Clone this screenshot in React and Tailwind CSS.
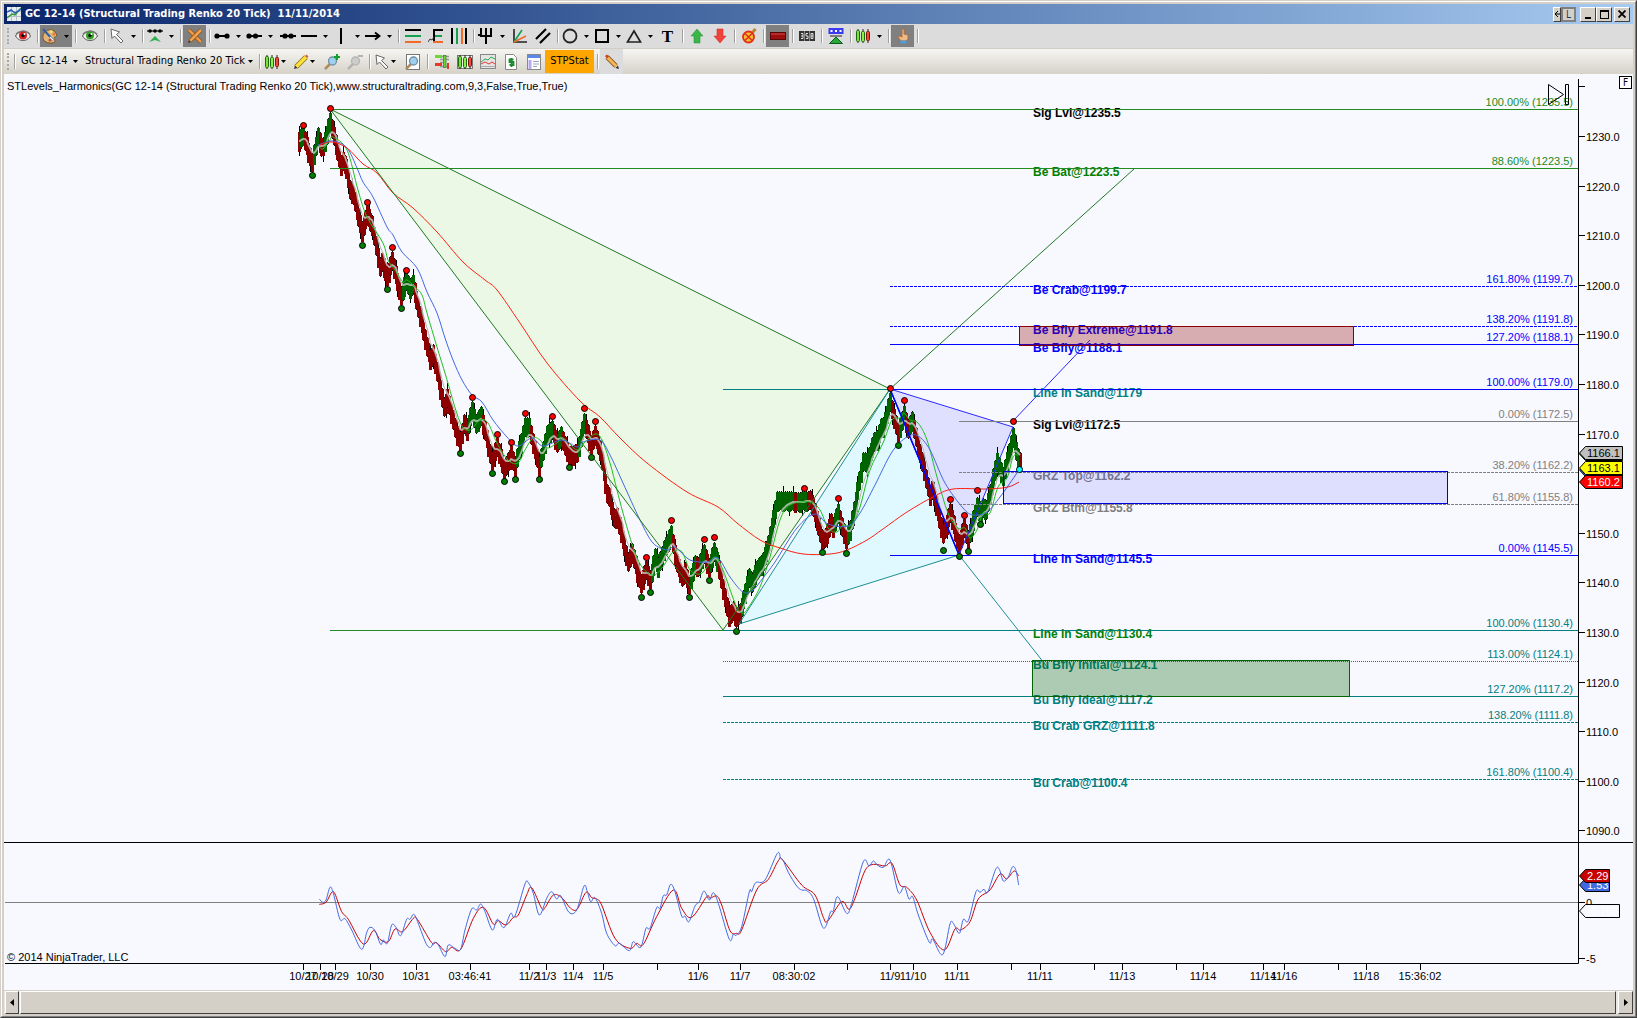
import { Fragment } from "react";

/* ---------- toolbar icons ---------- */

const CANDLES = (
  <g strokeWidth="1">
    <path d="M3 1v14M8 1v14M13 1v14" stroke="#222" />
    <rect x="1.5" y="2.5" width="3" height="11" rx="1" fill="#7be03a" stroke="#1c6b10" />
    <rect x="6.5" y="3.5" width="3" height="10" rx="1" fill="#8df04a" stroke="#1c6b10" />
    <rect x="11.5" y="3.5" width="3" height="9" rx="1" fill="#f04a3a" stroke="#7d1510" />
  </g>
);

const EYE = (color) => (
  <g>
    <path d="M0.5 8C3 4 6 3 8.500 3S13 4 15.500 8C13 12 10 12.500 8 12.500S3 12 0.500 8z" fill="#f4f0ec" stroke="#4b4b4b" />
    <path d="M1 6.500C4 2.500 12 2.500 15 6.500" fill="none" stroke="#777" strokeWidth="1.500" />
    <circle cx="8" cy="7.500" r="4" fill={color} />
    <circle cx="8" cy="7.500" r="1.700" fill="#111" />
    <circle cx="9.500" cy="6" r="1" fill="#fff" />
  </g>
);

const POINTER = <path d="M2 1l1 9.500 2.500-2.500 6.500 7 2-2-6.500-6.500 3-2.500z" fill="#fff" stroke="#666" />;

const LENS = (
  <g>
    <path d="M6 10l-5 5" stroke="#b08a5a" strokeWidth="2.500" />
    <circle cx="8.500" cy="7" r="4" fill="#9fd0ee" stroke="#6f8ea6" strokeWidth="1.300" />
  </g>
);

const ICONS = {
  eyeRed: EYE("#d31f1f"),
  eyeGreen: EYE("#35a327"),
  palette: (
    <g>
      <path d="M3 4c3-3 8-3 10 0 3 3 1 5 0 5-2 1 0 2 0 4s-5 3-9 1-4-7-1-10z" fill="#e0b47a" stroke="#7c5223" />
      <circle cx="9" cy="3.500" r="1.500" fill="#ede36a" />
      <circle cx="12" cy="6" r="1.500" fill="#e07b3a" />
      <circle cx="8" cy="12" r="1.500" fill="#c8432f" />
      <path d="M1 1l10 11" stroke="#2c5fa8" strokeWidth="2" />
      <path d="M8 9l3 3" stroke="#e8eef5" strokeWidth="1.500" />
    </g>
  ),
  pointer: POINTER,
  swing: (
    <g>
      <path d="M0 3h16" stroke="#111" strokeWidth="1.200" />
      <circle cx="3" cy="3" r="1.800" />
      <circle cx="8" cy="3" r="1.800" />
      <circle cx="13" cy="3" r="1.800" />
      <path d="M2 14l6-6 6 6-6-2z" fill="#2fae4d" />
    </g>
  ),
  tools: (
    <g>
      <path d="M2 2l12 12" stroke="#8a4b12" strokeWidth="4" />
      <path d="M2 2l12 12" stroke="#e79a4b" strokeWidth="2.600" />
      <path d="M14 2L3 13" stroke="#8a4b12" strokeWidth="4" />
      <path d="M14 2L3 13" stroke="#f2a24c" strokeWidth="2.600" />
      <path d="M1 15l1-3 2 2z" fill="#333" />
    </g>
  ),
  segment: (
    <g>
      <path d="M2 8h12" stroke="#000" strokeWidth="2" />
      <circle cx="3" cy="8" r="2.600" />
      <circle cx="13" cy="8" r="2.600" />
    </g>
  ),
  ray: (
    <g>
      <path d="M2 8h14" stroke="#000" strokeWidth="2" />
      <circle cx="3" cy="8" r="2.600" />
      <circle cx="9.500" cy="8" r="2.600" />
    </g>
  ),
  extended: (
    <g>
      <path d="M0 8h16" stroke="#000" strokeWidth="2" />
      <circle cx="5" cy="8" r="2.600" />
      <circle cx="11" cy="8" r="2.600" />
    </g>
  ),
  hline: <path d="M0 8h16" stroke="#000" strokeWidth="2" />,
  vline: <path d="M8 0v16" stroke="#000" strokeWidth="2" />,
  arrow: <path d="M0 8h14M10 4.500L14.500 8 10 11.500" fill="none" stroke="#000" strokeWidth="2" />,
  fib: (
    <g strokeWidth="2">
      <path d="M0 2h16" stroke="#000" />
      <path d="M0 8h16" stroke="#12a150" />
      <path d="M0 14h16" stroke="#f26a2a" />
    </g>
  ),
  fibExt: (
    <g fill="none" strokeWidth="2">
      <path d="M6 1v13M6 2h9" stroke="#000" />
      <path d="M7 8h7" stroke="#12a150" />
      <path d="M5 14h10" stroke="#f26a2a" />
      <path d="M0 14l2-3 2 1 2-3" stroke="#333" strokeWidth="1" />
    </g>
  ),
  fibTime: (
    <g strokeWidth="2">
      <path d="M1 0v16M15 0v16" stroke="#000" />
      <path d="M6 0v16" stroke="#12a150" />
      <path d="M11 0v16" stroke="#f26a2a" />
    </g>
  ),
  pitchfork: <path d="M3 0v8h10V0M8 0v16M3 7h-3" fill="none" stroke="#000" strokeWidth="2" />,
  fan: (
    <g strokeWidth="1.600" fill="none">
      <path d="M2 1v13h13" stroke="#222" />
      <path d="M2 14L10 2" stroke="#12a150" />
      <path d="M2 14l12-6" stroke="#f26a2a" />
    </g>
  ),
  parallel: <path d="M1 11L11 1M5 15L15 5" stroke="#000" strokeWidth="2.200" />,
  ellipse: <circle cx="8" cy="8" r="6.500" fill="none" stroke="#222" strokeWidth="1.800" />,
  square: <rect x="2" y="2" width="12" height="12" fill="none" stroke="#000" strokeWidth="2" />,
  triangle: <path d="M8 3L14.500 14h-13z" fill="none" stroke="#222" strokeWidth="1.700" />,
  up: <path d="M8 1l6 7h-3v7H5V8H2z" fill="#39b54a" stroke="#2a9a3b" strokeWidth=".6" />,
  down: <path d="M8 15L2 8h3V1h6v7h3z" fill="#ef4238" stroke="#d5342c" strokeWidth=".6" />,
  noDraw: (
    <g>
      <path d="M14.500 1L4 13" stroke="#c08030" strokeWidth="3" />
      <circle cx="7.500" cy="9" r="5.500" fill="#f5c02c" stroke="#e0301e" strokeWidth="1.800" />
      <path d="M4 5.500l7 7M11 5.500l-7 7" stroke="#e0301e" strokeWidth="1.500" />
    </g>
  ),
  bar: (
    <g>
      <rect x="0.500" y="4.500" width="15" height="7" fill="#9c0d0d" stroke="#5a0505" />
      <path d="M1 6h14" stroke="#d24a4a" />
    </g>
  ),
  counter: (
    <g>
      <rect x="0" y="3" width="16" height="10" fill="#333" />
      <path d="M5.500 3v10M10.500 3v10" stroke="#888" />
      <path d="M2 5.500h2v5H2M2 8h2M9 5.500H7V8h2v2.500H7M12 5.500h2v5h-2zM12 8h2" fill="none" stroke="#eee" strokeWidth=".9" />
    </g>
  ),
  zone: (
    <g>
      <rect x="0.500" y="0" width="15" height="6" fill="#3a3af0" />
      <path d="M2.500 3h2M7 3h2M11.500 3h2" stroke="#fff" strokeWidth="2" />
      <path d="M8 9l6.500 6.500h-13z" fill="#28a838" stroke="#0c5a18" />
      <path d="M2 8h12" stroke="#222" />
    </g>
  ),
  candles: CANDLES,
  hand: (
    <g>
      <path d="M7 1h2v5l4 1v4l-2 2H6L3 9l1-1 3 1z" fill="#f0b984" stroke="#a8683a" strokeWidth=".8" />
      <rect x="5.500" y="12.500" width="6" height="3" fill="#4aa0dc" />
    </g>
  ),
  pencilYellow: (
    <g>
      <path d="M3 13L13 3" stroke="#8a7410" strokeWidth="5" />
      <path d="M3 13L13 3" stroke="#ffe13a" strokeWidth="3.400" />
      <path d="M12 2l2 2 1.500-1.500-2-2z" fill="#d8604a" />
      <path d="M1 15l1-3.500L4.500 14z" fill="#333" />
    </g>
  ),
  pencilOrange: (
    <g>
      <path d="M3 3l9 9" stroke="#8a5a20" strokeWidth="4.600" />
      <path d="M3 3l9 9" stroke="#f7b556" strokeWidth="3" />
      <path d="M1 2l2-1.500 2 2L3 4.500z" fill="#c8412c" />
      <path d="M15 15l-3.500-1L14 11.500z" fill="#333" />
    </g>
  ),
  zoomIn: (
    <g>
      {LENS}
      <path d="M13 0v6M10 3h6" stroke="#12a12a" strokeWidth="2" />
    </g>
  ),
  zoomOut: (
    <g fill="#ccc" stroke="#b4b4b4">
      <path d="M6 10l-5 5" strokeWidth="2.500" />
      <circle cx="8.500" cy="7" r="4" strokeWidth="1.300" />
      <path d="M11 2h5" strokeWidth="2" />
    </g>
  ),
  zoomBox: (
    <g>
      <rect x="1.500" y=".5" width="13" height="15" fill="#fff" stroke="#777" />
      {LENS}
    </g>
  ),
  chartTrader: (
    <g>
      <path d="M6 2.500h9M6 5.500h9M6 8.500h6M6 12.500h9" stroke="#999" strokeWidth="1.500" />
      <path d="M1 1h7v3H1z" fill="#6fd63a" />
      <path d="M1 9h7v3H1z" fill="#e2382e" />
      <rect x="9.500" y="1.500" width="2.500" height="12" fill="#6fd63a" stroke="#2f7d1c" strokeWidth=".7" />
      <rect x="13" y="9" width="2" height="6" fill="#e2382e" />
    </g>
  ),
  dataSeries: (
    <g>
      <rect x=".5" y="1.500" width="15" height="13" fill="#f2f2f2" stroke="#777" />
      {CANDLES}
    </g>
  ),
  indicators: (
    <g>
      <rect x=".5" y=".5" width="15" height="14" fill="#e4e4e4" stroke="#888" />
      <path d="M1 8l4-3 3 1 3-3 4 2" fill="none" stroke="#2fae4d" />
      <path d="M1 10l4-2 4 2 3-2 3 2" fill="none" stroke="#e2382e" />
      <path d="M1 12.500h14" stroke="#aaa" />
    </g>
  ),
  strategy: (
    <g>
      <path d="M2.500.5h8l3 3v12h-11z" fill="#fff" stroke="#888" />
      <path d="M10.500 5.500H6.500V8h4v3h-4M8.500 4v9" fill="none" stroke="#1c8a2a" strokeWidth="1.800" />
    </g>
  ),
  properties: (
    <g>
      <rect x="1.500" y=".5" width="13" height="15" fill="#fff" stroke="#888" />
      <path d="M2 2.500h12" stroke="#5a8be8" strokeWidth="3" />
      <path d="M4 6v9" stroke="#b4a8f0" strokeWidth="3" />
      <path d="M7 7.500h6M7 10h6M7 12.500h4" stroke="#9aa6b8" />
    </g>
  ),
};

const Icon = ({ name }) => (
  <svg viewBox="0 0 16 16" className="size-4 shrink-0" aria-hidden="true">
    {ICONS[name]}
  </svg>
);

const Caret = () => (
  <svg viewBox="0 0 5 3" className="h-[3px] w-[5px] shrink-0" aria-hidden="true">
    <path d="M0 0h5L2.500 3z" />
  </svg>
);

const Grip = () => (
  <span className="flex w-[7px] shrink-0 justify-center">
    <span className="my-1 border-l-2 border-dotted border-[#a8a8a8]" />
  </span>
);

const Sep = () => (
  <span className="flex w-[6px] shrink-0 justify-end py-[5px] pr-px">
    <span className="w-[2px] border-l border-[#a0a0a0] bg-white" />
  </span>
);

// "|" is a divider, a trailing "v" adds a menu arrow, a leading "*" is pressed
const DRAWING_TOOLS = [
  "eyeRed", "|", "*palette v", "|", "eyeGreen", "|", "pointer v", "|", "swing v", "|", "*tools", "|",
  "segment v", "ray v", "extended", "hline v", "vline v", "arrow v", "|", "fib", "fibExt", "fibTime", "|",
  "pitchfork v", "fan", "parallel", "|", "ellipse v", "square v", "triangle v", "text", "|", "up", "down", "|",
  "noDraw", "|", "*bar", "|", "counter", "|", "zone", "|", "candles v", "|", "*hand", "|",
];

function ToolButton({ spec, compact }) {
  const pressed = spec.startsWith("*");
  const menu = spec.endsWith(" v");
  const name = spec.replace("*", "").replace(" v", "");
  return (
    <button
      aria-label={name}
      className={[
        "my-px flex shrink-0 items-center",
        menu ? (compact ? "w-[29px] gap-px pl-[2px]" : "w-8 gap-[6px] pl-[2px]") : "w-[23px] justify-center",
        pressed ? "bg-[#808080]" : "",
      ].join(" ")}
    >
      {name === "text" ? (
        <span className="w-full text-center font-['Liberation_Serif',serif] text-[17px] leading-none font-bold">T</span>
      ) : (
        <Icon name={name} />
      )}
      {menu && <Caret />}
    </button>
  );
}

function Tools({ items, compact }) {
  return items.map((spec, i) => (spec === "|" ? <Sep key={i} /> : <ToolButton key={i} spec={spec} compact={compact} />));
}

function Picker({ label, value, width }) {
  return (
    <label className={`relative flex shrink-0 items-center ${width}`}>
      <select aria-label={label} className="w-full appearance-none bg-transparent pl-1 outline-none">
        <option>{value}</option>
      </select>
      <span className="pointer-events-none absolute right-[3px] flex">
        <Caret />
      </span>
    </label>
  );
}

const RAISED = "border border-t-white border-l-white border-r-[#404040] border-b-[#404040] bg-[#d4d0c8]";

function TitleBar() {
  return (
    <header className="flex h-5 items-center bg-linear-to-r from-[#0a246a] to-[#a6caf0] px-[3px] text-white">
      <svg viewBox="0 0 14 14" className="size-[14px]" aria-hidden="true">
        <rect width="14" height="14" fill="#e8edf2" />
        <path d="M0 4.500h14M0 9.500h14M4.500 0v14M9.500 0v14" stroke="#b4bcc8" />
        <path d="M0 11l5-4 3 1 6-7" fill="none" stroke="#2f9a2f" strokeWidth="1.500" />
        <path d="M0 5l4-2 4 3 6-4" fill="none" stroke="#2c5fb8" strokeWidth="1.500" />
      </svg>
      <h1 className="ml-1 whitespace-pre text-[11px] leading-5 font-bold">
        {"GC 12-14 (Structural Trading Renko 20 Tick)  11/11/2014"}
      </h1>
      <div className="ml-auto flex text-black">
        <button className={`flex h-[15px] w-2 items-center ${RAISED}`} aria-label="Link">
          <svg viewBox="0 0 6 8" className="h-2 w-[6px]"><path d="M6 4H1M4 1L1 4l3 3" fill="none" stroke="#000" /></svg>
        </button>
        <button className="mr-1 h-[15px] w-[15px] border-2 border-[#808080] bg-[#d4d0c8] text-[10px] leading-[11px] text-[#1c3a6a]">L</button>
        <button className={`flex h-[15px] w-4 items-end justify-center pb-[2px] ${RAISED}`} aria-label="Minimize">
          <span className="h-[2px] w-[6px] bg-black" />
        </button>
        <button className={`mr-[2px] flex h-[15px] w-4 items-center justify-center ${RAISED}`} aria-label="Maximize">
          <span className="h-[9px] w-[9px] border border-t-2 border-black" />
        </button>
        <button className={`flex h-[15px] w-4 items-center justify-center ${RAISED}`} aria-label="Close">
          <svg viewBox="0 0 8 8" className="size-2"><path d="M.5.5l7 7M7.500.5l-7 7" stroke="#000" strokeWidth="1.800" /></svg>
        </button>
      </div>
    </header>
  );
}

/* ---------- chart data ---------- */

const AXIS_X = 1578;
const priceY = (p) => 136 + (1230 - p) * 4.96;

const GREEN = "#228b22";
const TEAL = "#008080";
const BLUE = "#0000ff";
const GRAY = "#808080";

// y, start x, stroke, dash, right hand label, bold caption, caption colour
const LEVELS = [
  [109, 330, GREEN, null, "100.00% (1235.5)", "Sig Lvl@1235.5", "#000"],
  [168, 330, GREEN, null, "88.60% (1223.5)", "Be Bat@1223.5", "#008000"],
  [286, 890, BLUE, "3 1", "161.80% (1199.7)", "Be Crab@1199.7", BLUE],
  [326, 890, BLUE, "3 1", "138.20% (1191.8)", "Be Bfly Extreme@1191.8", BLUE],
  [344, 890, BLUE, null, "127.20% (1188.1)", "Be Bfly@1188.1", BLUE],
  [389, 890, BLUE, null, "100.00% (1179.0)", "Line in Sand@1179", TEAL],
  [421, 959, GRAY, null, "0.00% (1172.5)", "Sig Lvl@1172.5", "#000"],
  [472, 959, GRAY, "3 1", "38.20% (1162.2)", "GRZ Top@1162.2", GRAY],
  [504, 959, GRAY, "3 1", "61.80% (1155.8)", "GRZ Btm@1155.8", GRAY],
  [555, 890, BLUE, null, "0.00% (1145.5)", "Line in Sand@1145.5", BLUE],
  [630, 723, TEAL, null, "100.00% (1130.4)", "Line in Sand@1130.4", "#008000"],
  [661, 723, TEAL, "1 1", "113.00% (1124.1)", "Bu Bfly Initial@1124.1", TEAL],
  [696, 723, TEAL, null, "127.20% (1117.2)", "Bu Bfly Ideal@1117.2", TEAL],
  [722, 723, TEAL, "3 1", "138.20% (1111.8)", "Bu Crab GRZ@1111.8", TEAL],
  [779, 723, TEAL, "3 1", "161.80% (1100.4)", "Bu Crab@1100.4", TEAL],
];

// brick path: x, y, direction colour of the leg that ends there
const BRICKS = `297,141,r 300,140,r 301,138,g 303,135,g 312,163,r 318,137,g 321,147,r 323,147,r 330,122,g 341,165,r 343,161,r 346,168,r
350,190,r 353,195,r 362,231,r 367,215,r 372,225,r 380,267,r 382,262,r 387,277,r 392,261,r 401,296,r 406,281,g 410,288,g 413,284,g
416,300,r 427,347,r 430,359,r 433,354,r 444,407,r 447,398,r 457,435,r 460,441,r 464,424,r 467,430,r 472,411,g 476,424,g 481,416,g
492,461,r 497,447,r 504,469,r 508,462,r 511,455,r 515,466,r 525,427,g 529,427,g 539,466,r 547,435,g 552,430,g 557,443,r 561,436,g
569,456,r 577,453,r 584,423,g 591,445,r 595,435,r 600,450,r 607,494,r 609,497,r 614,518,r 617,517,r 628,562,r 632,553,r 641,584,r
646,570,r 650,580,r 655,558,g 658,567,g 664,550,g 671,535,g 677,563,r 682,577,r 685,572,r 689,585,r 695,565,g 698,567,r 704,554,g
709,568,r 714,552,g 717,561,g 729,616,r 733,611,r 736,618,r 740,613,r 743,600,g 749,578,g 752,583,g 757,570,g 763,562,g 768,545,g
777,501,g 793,501,g 796,502,r 806,501,g 810,500,r 813,507,r 822,539,r 825,538,r 831,523,r 833,527,r 838,513,g 846,540,r 850,530,g
863,462,g 867,462,g 874,442,g 877,440,g 881,428,g 883,427,g 890,402,g 898,433,r 904,415,g 908,429,r 912,421,g 930,495,r 932,490,r
943,534,r 950,513,r 959,544,r 964,528,r 968,540,r 977,507,g 981,513,g 983,508,g 986,510,g 997,462,g 1003,477,g 1013,437,g
1018,458,g 1020,462,r`
  .split(/\s+/)
  .map((s) => s.split(","))
  .map(([x, y, c]) => [Number(x), Number(y), c]);

const HIGHS = [
  [303, 125], [330, 108], [367, 202], [392, 247], [406, 270], [472, 397], [497, 434], [511, 442], [525, 413], [552, 416],
  [584, 408], [595, 421], [646, 557], [671, 520], [704, 539], [714, 537], [804, 488], [838, 498], [890, 388], [904, 400],
  [950, 499], [964, 515], [977, 490], [1013, 421],
];
const LOWS = [
  [312, 175], [362, 245], [387, 289], [401, 308], [460, 453], [492, 473], [504, 481], [515, 479], [539, 479], [569, 467],
  [591, 457], [641, 597], [650, 592], [689, 597], [709, 580], [736, 631], [822, 552], [846, 553], [898, 445], [943, 550],
  [959, 556], [968, 551], [980, 524],
];

// Catmull-Rom through the samples, written as cubic segments
function smooth(points) {
  const p = points.split(" ").map((s) => s.split(",").map(Number));
  let d = `M${p[0]}`;
  for (let i = 0; i < p.length - 1; i++) {
    const a = p[i - 1] ?? p[i];
    const b = p[i];
    const c = p[i + 1];
    const e = p[i + 2] ?? c;
    d += `C${b[0] + (c[0] - a[0]) / 6} ${b[1] + (c[1] - a[1]) / 6} ${c[0] - (e[0] - b[0]) / 6} ${c[1] - (e[1] - b[1]) / 6} ${c[0]} ${c[1]}`;
  }
  return d;
}

const FAST_MA = smooth(
  "320,147 323,149 330,140 333,137 347,150 358,190 367,217 383,243 388,260 395,270 403,282 407,280 415,287 422,295 427,313 437,347 445,373 460,422 470,430 480,420 488,423 497,443 508,460 518,463 525,450 533,438 540,440 547,448 557,443 563,438 577,450 584,443 595,434 602,440 610,463 617,490 623,513 633,547 642,567 653,575 662,568 673,552 682,552 690,570 700,574 707,567 715,557 723,570 735,603 742,613 748,608 760,587 770,557 780,520 790,505 810,502 820,510 828,528 837,532 843,525 852,525 860,507 870,470 883,443 892,420 900,418 904,413 910,420 918,423 927,440 937,477 948,513 958,528 965,528 970,538 977,530 983,513 990,513 998,487 1007,478 1013,457 1018,455"
);
const MID_MA = smooth(
  "318,145 333,141 347,148 357,168 363,182 373,197 387,227 393,235 402,252 417,268 427,292 437,313 445,338 453,360 462,380 472,395 482,402 493,420 507,437 518,446 532,438 543,446 562,440 577,447 583,442 600,440 610,455 623,483 640,520 653,543 667,550 675,547 690,560 707,562 718,558 730,577 743,592 753,590 763,578 775,562 797,528 815,514 828,524 848,526 860,513 875,485 892,452 907,437 918,436 930,450 945,483 963,508 973,515 987,512 1000,497 1017,473"
);
const SLOW_MA = smooth(
  "320,145 332,142 347,148 363,164 377,173 393,193 413,208 437,232 463,262 485,280 497,290 520,323 547,363 580,401 600,417 620,438 647,463 687,492 718,507 737,523 760,540 780,548 803,554 830,554 847,550 867,540 883,529 907,512 933,497 953,489 987,489 1008,487 1019,482"
);

// oscillator samples, three units to a pixel, origin at 280,830
const OSC = smooth(
  "118,207 128,217 138,210 150,172 160,190 180,268 195,266 215,300 245,358 260,308 270,292 285,302 302,343 310,330 322,340 335,285 348,292 362,317 380,268 390,268 400,253 410,268 438,340 452,352 462,337 475,345 495,380 505,345 525,355 542,358 555,300 575,237 590,240 602,222 615,245 637,300 652,268 672,293 692,250 705,258 735,162 745,158 760,190 778,255 800,205 815,185 830,207 842,197 867,247 890,240 912,168 922,185 932,215 945,203 965,250 980,310 1005,347 1018,340 1048,362 1060,335 1082,352 1098,295 1110,295 1130,233 1140,235 1150,197 1160,195 1172,163 1185,185 1205,258 1215,258 1227,275 1245,228 1258,215 1272,183 1288,210 1300,188 1315,220 1348,328 1360,312 1368,316 1385,290 1408,185 1415,185 1427,158 1455,150 1492,70 1502,85 1510,92 1525,127 1550,168 1565,180 1580,182 1600,205 1625,285 1637,290 1652,245 1660,243 1673,200 1700,250 1715,220 1750,95 1767,108 1780,93 1792,105 1810,112 1830,90 1855,187 1873,170 1887,207 1898,200 1915,255 1948,337 1958,327 1988,374 2010,282 2020,280 2038,310 2050,268 2065,272 2088,185 2100,187 2112,178 2123,187 2147,118 2158,118 2170,153 2185,140 2198,110 2208,122 2216,165"
);
const OSC_SIGNAL = smooth(
  "118,223 138,217 155,187 165,192 185,245 205,268 250,342 280,302 300,328 325,335 345,297 368,305 400,265 412,268 455,338 470,338 497,365 515,352 542,358 580,265 610,232 640,282 655,272 678,285 700,262 715,255 740,195 755,173 785,235 795,233 820,195 845,203 872,235 892,237 918,187 935,203 950,207 965,225 1005,325 1050,355 1070,340 1090,343 1130,260 1180,180 1205,235 1235,262 1280,200 1290,205 1310,198 1325,225 1350,302 1370,310 1385,300 1430,180 1465,148 1495,92 1508,90 1565,165 1605,195 1630,262 1643,273 1685,215 1707,238 1725,205 1755,122 1780,103 1815,108 1830,98 1840,108 1860,165 1880,172 1910,210 1950,307 1993,360 2025,297 2042,300 2070,275 2095,207 2130,180 2160,132 2180,147 2202,123 2216,138"
);

const TIMES = [
  [303, "10/27"], [320, "10/28"], [335, "10/29"], [370, "10/30"], [416, "10/31"], [470, "03:46:41"], [529, "11/2"],
  [546, "11/3"], [573, "11/4"], [603, "11/5"], [657], [698, "11/6"], [740, "11/7"], [794, "08:30:02"], [847],
  [890, "11/9"], [913, "11/10"], [957, "11/11"], [1011], [1040, "11/11"], [1094], [1122, "11/13"], [1176],
  [1203, "11/14"], [1263, "11/14"], [1284, "11/16"], [1338], [1366, "11/18"], [1420, "15:36:02"],
];

const PRICES = [1230, 1220, 1210, 1200, 1190, 1180, 1170, 1150, 1140, 1130, 1120, 1110, 1100, 1090];

// one bar every two pixels along the brick path
const BARS = BRICKS.slice(1).flatMap(([x, y, c], i) => {
  const [px, py] = BRICKS[i];
  const steps = Math.max(1, Math.round((x - px) / 2));
  return Array.from({ length: steps }, (_, k) => {
    const t = (k + 1) / steps;
    return { x: Math.round(px + (x - px) * t), y: Math.round(py + (y - py) * t), c };
  });
});

let ema = BARS[0].y;
const TRAIL = BARS.map((b) => {
  ema += (b.y - ema) * 0.28;
  return `${b.x},${Math.round(ema)}`;
}).join(" ");

function Bars() {
  return BARS.map(({ x, y, c }, i) => {
    const up = (i * 7) % 5 === 0 ? 15 : 10;
    const down = (i * 5) % 7 === 0 ? 15 : 10;
    return (
      <Fragment key={i}>
        <path d={`M${x + 0.5} ${y - up}V${y + down}`} stroke="#000" />
        <rect x={x - 1} y={y - 9} width="3" height={i % 3 ? 18 : 20} fill={c === "g" ? "#006400" : "#8b0000"} />
      </Fragment>
    );
  });
}

function Tag({ y, right, fill, color, children }) {
  return (
    <g>
      <path d={`M${AXIS_X + 1.5} ${y + 7}l6-6.500H${right + 0.5}v13H${AXIS_X + 7.5}z`} fill={fill} stroke="#000" />
      <text x={AXIS_X + 9} y={y + 11} fill={color}>{children}</text>
    </g>
  );
}

function Chart() {
  return (
    <svg viewBox="4 74 1629 916" className="block h-auto w-full bg-[#f8f8ff] font-['Liberation_Sans',Arial,sans-serif] text-[11px]">
      {/* pattern fills */}
      <path d="M330 109L890 389L723 630z" fill="#ebf8e5" />
      <path d="M890 389L959 555L739 624z" fill="#e0f8ff" />
      <path d="M890 389L1013 427L959 555z" fill="#dfdfff" />

      {/* price */}
      <Bars />
      <g fill="none">
        <polyline points={TRAIL} stroke="#fff" strokeWidth="2" opacity=".5" />
        <polyline points={TRAIL} stroke="#b4b4b4" />
        <path d={FAST_MA} stroke="#1fbf1f" />
        <path d={MID_MA} stroke="#4169e1" />
        <path d={SLOW_MA} stroke="#ff2010" />
      </g>

      {/* pattern legs */}
      <g fill="none">
        <path d="M330 109L890 389L723 630zM890 389L1134 169" stroke="#1f7a1f" />
        <path d="M890 389L959 555L739 624zM959 555L1048 668" stroke="#1a9090" />
        <path d="M890 389L1013 427L959 555zM1013 421L1090 340" stroke="#2a2aff" />
        <path d="M890 389L959 555" stroke={BLUE} strokeWidth="1.500" />
      </g>

      {/* levels */}
      {LEVELS.map(([y, x, stroke, dash, label, caption, color]) => (
        <g key={label}>
          <text x="1033" y={y + 8} fill={color} className="text-[12px] font-bold">{caption}</text>
          <text x="1573" y={y - 3} textAnchor="end" fill={stroke}>{label}</text>
          <path d={`M${x} ${y + 0.5}H${AXIS_X}`} stroke={stroke} strokeDasharray={dash ?? undefined} />
        </g>
      ))}
      <path d="M723 389.500H890" stroke={TEAL} />
      <path d="M330 630.500H723" stroke={GREEN} />

      {/* zones */}
      <rect x="1019.500" y="326.500" width="334" height="19" fill="#8b0000" fillOpacity=".3" stroke="#8b0000" />
      <rect x="1003.500" y="471.500" width="444" height="32" fill="#0000ff" fillOpacity=".1" stroke="#0000dd" />
      <rect x="1032.500" y="660.500" width="317" height="36" fill="#006400" fillOpacity=".3" stroke="#006400" />

      {/* swing points */}
      <g stroke="#000">
        {LOWS.map(([x, y]) => <circle key={x} cx={x + 0.5} cy={y + 0.5} r="3" fill="#008000" />)}
        {HIGHS.map(([x, y]) => <circle key={x} cx={x + 0.5} cy={y + 0.5} r="3" fill="#ff0000" />)}
        <circle cx="1019.500" cy="469.500" r="3" fill="#00ffff" />
      </g>

      {/* oscillator */}
      <path d="M5 902.500H1578" stroke="#808080" />
      <g transform="translate(280 830) scale(.33333)" fill="none" strokeWidth="3">
        <path d={OSC_SIGNAL} stroke="#c80000" />
        <path d={OSC} stroke="#4169e1" />
      </g>

      {/* axes */}
      <path d="M4 842.500H1633M5 963.500H1578.500V79M1578 86.500h7M1578 902.500h7M1578 958.500h7" fill="none" stroke="#000" />
      {PRICES.map((p) => {
        const y = Math.round(priceY(p));
        return (
          <g key={p}>
            <path d={`M1578 ${y + 0.5}h7`} stroke="#000" />
            <text x="1586" y={y + 5}>{p.toFixed(1)}</text>
          </g>
        );
      })}
      <text x="1586" y="907">0</text>
      <text x="1586" y="963">-5</text>
      {TIMES.map(([x, label]) => (
        <g key={x}>
          <path d={`M${x + 0.5} 964v6`} stroke="#000" />
          {label && <text x={x} y="980" textAnchor="middle">{label}</text>}
        </g>
      ))}

      <Tag y={447} right={1622} fill="#32cd32" />
      <Tag y={463} right={1622} fill="#4169e1" />
      <Tag y={446} right={1622} fill="#c0c0c0" color="#000">1166.1</Tag>
      <Tag y={461} right={1622} fill="#ffff00" color="#000">1163.1</Tag>
      <Tag y={475} right={1622} fill="#ff0000" color="#fff">1160.2</Tag>
      <Tag y={878} right={1609} fill="#4169e1" color="#fff">1.53</Tag>
      <Tag y={869} right={1609} fill="#c80000" color="#fff">2.29</Tag>
      <Tag y={904} right={1619} fill="#f8f8ff" color="#fff">-0.768</Tag>

      <path d="M1548.500 84.500v20l15-10zM1565.500 84.500h3v20h-3z" fill="none" stroke="#000" />
      <text x="7" y="90">
        STLevels_Harmonics(GC 12-14 (Structural Trading Renko 20 Tick),www.structuraltrading.com,9,3,False,True,True)
      </text>
      <text x="7" y="961">© 2014 NinjaTrader, LLC</text>
    </svg>
  );
}

function ScrollBar() {
  return (
    <div className="flex h-6 gap-px border-t border-[#d4d0c8] bg-[#e9e7e3] pl-px">
      <button className={`flex w-[14px] items-center justify-center ${RAISED}`} aria-label="Scroll left">
        <svg viewBox="0 0 4 7" className="h-[7px] w-1"><path d="M4 0v7L0 3.500z" /></svg>
      </button>
      <div className={`flex-1 ${RAISED}`} />
      <button className={`ml-px flex w-[15px] items-center justify-center ${RAISED}`} aria-label="Scroll right">
        <svg viewBox="0 0 4 7" className="h-[7px] w-1"><path d="M0 0v7l4-3.500z" /></svg>
      </button>
    </div>
  );
}

export default function App() {
  return (
    <div className="border border-t-[#d4d0c8] border-l-[#d4d0c8] border-r-[#404040] border-b-[#404040] bg-[#d4d0c8] font-['DejaVu_Sans_Condensed','DejaVu_Sans',sans-serif] text-[11px] text-black">
      <div className="border border-t-white border-l-white border-r-[#808080] border-b-[#808080] p-[2px]">
        <TitleBar />

        <div className="flex h-[25px] overflow-hidden border-b border-[#d0cdc4] bg-[#dcdcdc]" role="toolbar" aria-label="Drawing tools">
          <Grip />
          <Tools items={DRAWING_TOOLS} />
        </div>

        <div className="flex h-[25px] overflow-hidden bg-linear-to-b from-[#f6f5f2] to-[#d5d2c8]" role="toolbar" aria-label="Chart">
          <Grip />
          <Sep />
          <Picker label="Instrument" value="GC 12-14" width="w-16" />
          <Picker label="Bar type" value="Structural Trading Renko 20 Tick" width="w-[175px]" />
          <Sep />
          <Tools
            compact
            items={["candles v", "pencilYellow v", "zoomIn", "zoomOut", "|", "pointer v", "zoomBox", "|", "chartTrader", "dataSeries", "indicators", "strategy", "properties"]}
          />
          <button className="my-px w-[49px] shrink-0 bg-[#ffa500]">STPStat</button>
          <Sep />
          <span className="flex shrink-0 bg-[#dcdcdc]">
            <ToolButton spec="pencilOrange" />
          </span>
        </div>

        <main className="relative">
          <Chart />
          <button className="absolute top-[2px] right-px size-[13px] border border-black bg-white text-[10px] leading-[11px]">F</button>
        </main>

        <ScrollBar />
      </div>
    </div>
  );
}
